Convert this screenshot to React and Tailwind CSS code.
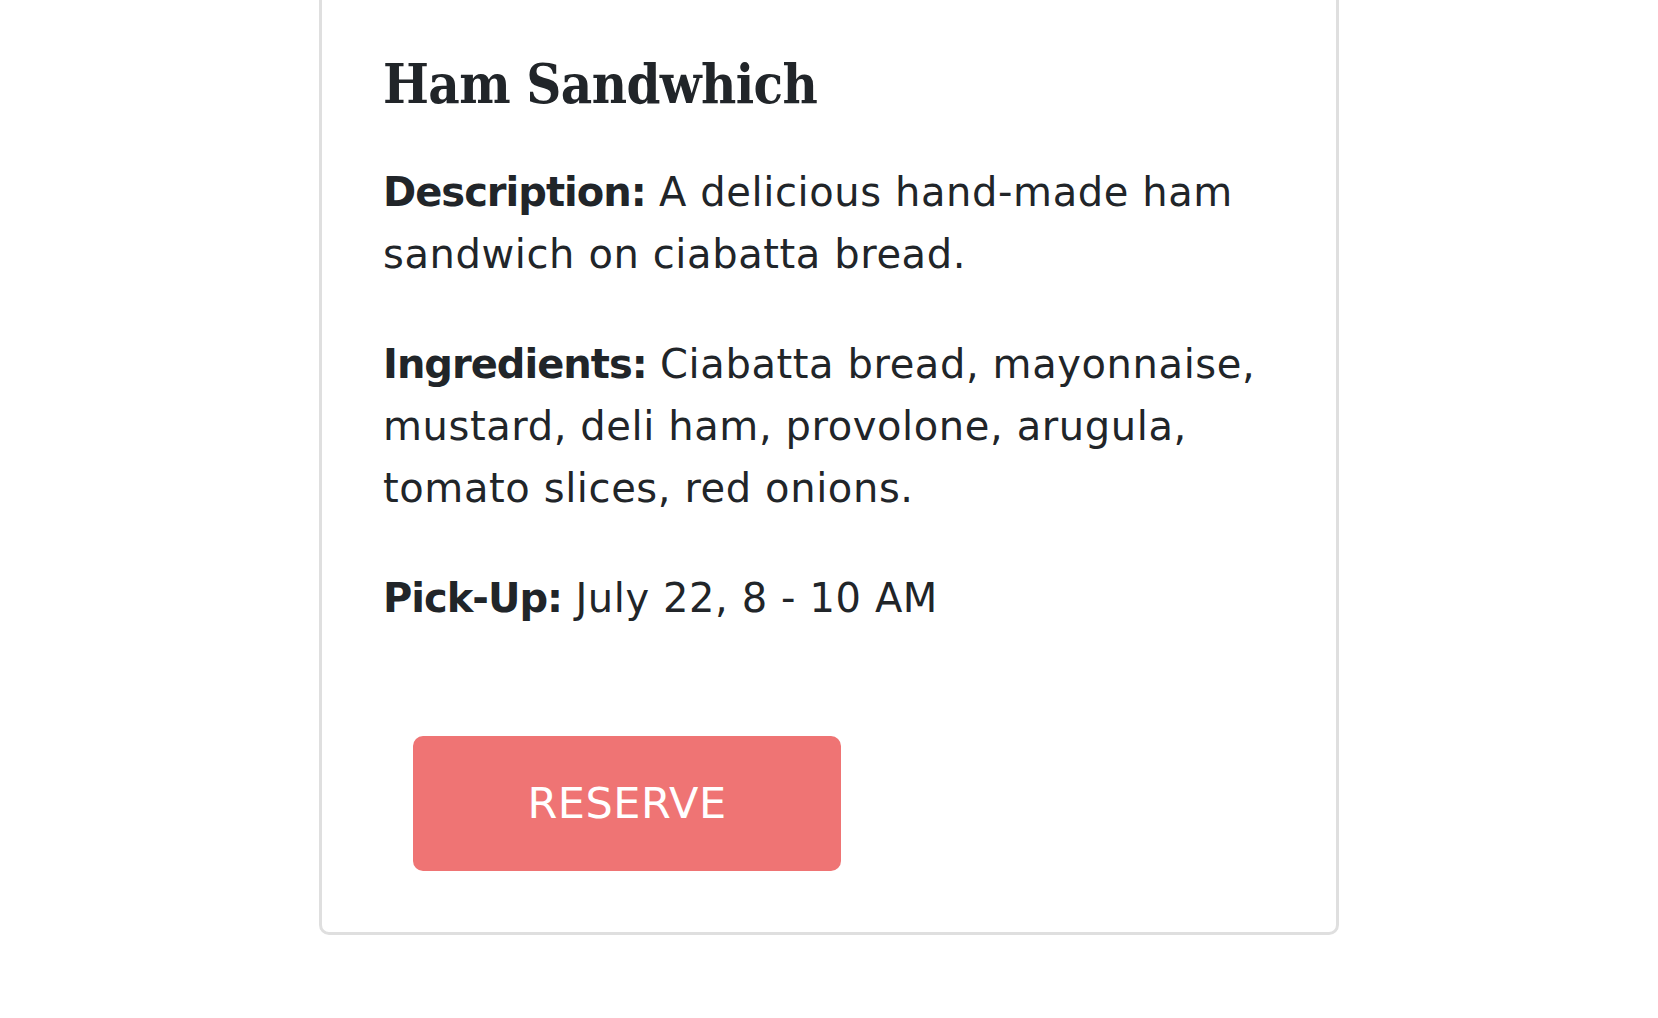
import React from "react";

const item = {
  name: "Ham Sandwhich",
  description: "A delicious hand-made ham sandwich on ciabatta bread.",
  ingredients:
    "Ciabatta bread, mayonnaise, mustard, deli ham, provolone, arugula, tomato slices, red onions.",
  pickUp: "July 22, 8 - 10 AM",
};

function Field({ label, children, last }) {
  return (
    <p
      className={`text-[40px] leading-[62px] tracking-[0.6px] ${
        last ? "" : "mb-[48px]"
      }`}
    >
      <strong className="font-bold tracking-[-1px]">{label}</strong>
      <span>{" " + children}</span>
    </p>
  );
}

function App() {
  return (
    <div
      className="min-h-screen bg-white text-[#212529]"
      style={{ fontFamily: '"DejaVu Sans", "Noto Sans", sans-serif' }}
    >
      <div className="mx-auto -mt-[16px] w-[1020px] rounded-[10px] border-[3px] border-[#dfdfdf] bg-white p-[61px]">
        <h1 className="mb-[44px] mt-[4px] font-['DejaVu_Serif_Condensed','Liberation_Serif',serif] text-[54px] font-bold leading-[1.2] tracking-[-0.6px]">
          {item.name}
        </h1>

        <Field label="Description:">{item.description}</Field>
        <Field label="Ingredients:">{item.ingredients}</Field>
        <Field label="Pick-Up:" last>
          {item.pickUp}
        </Field>

        <button className="ml-[30px] mt-[107px] flex h-[135px] w-[428px] items-center justify-center rounded-[10px] bg-[#ef7474] text-[43px] tracking-[0.5px] text-white">
          RESERVE
        </button>
      </div>
    </div>
  );
}

export default App;
